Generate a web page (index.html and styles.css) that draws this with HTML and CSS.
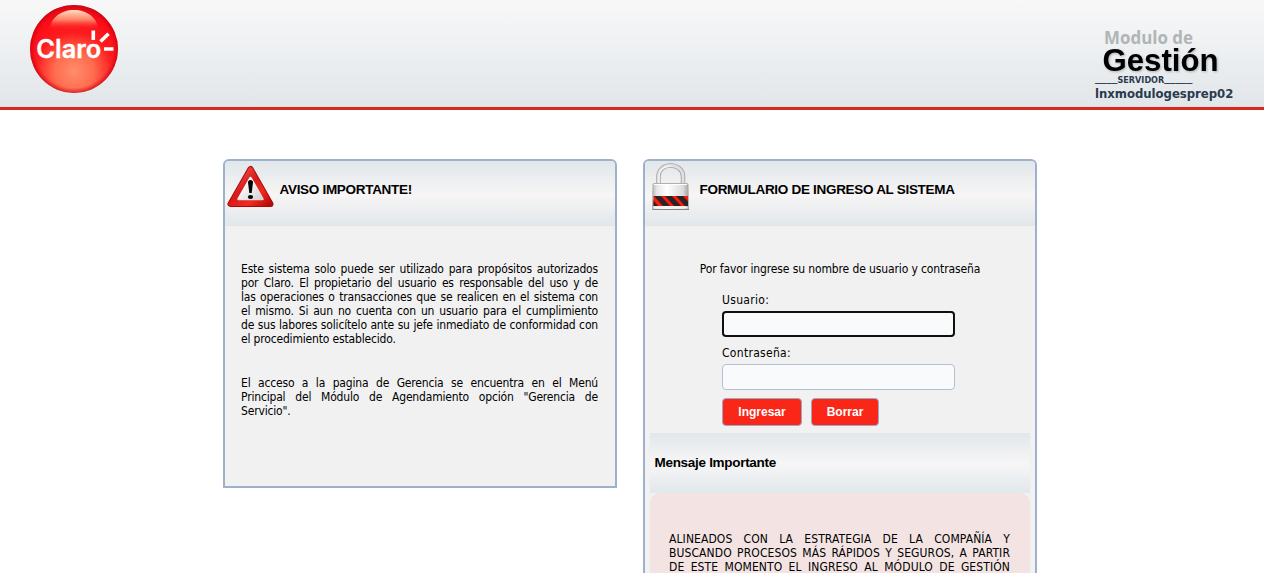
FILE: index.html
```html
<!DOCTYPE html>
<html lang="es">
<head>
<meta charset="utf-8">
<title>Modulo de Gestión</title>
<link rel="stylesheet" href="styles.css">
</head>
<body>
<header class="top">
  <svg class="logo" width="88" height="88" viewBox="0 0 88 88" role="img" aria-label="Claro">
    <defs>
      <radialGradient id="ball" cx=".5" cy=".76" r=".74">
        <stop offset="0" stop-color="#ff8d6c"/><stop offset=".3" stop-color="#ff6c4f"/>
        <stop offset=".6" stop-color="#fd1c1f"/><stop offset=".84" stop-color="#fd0d18"/><stop offset="1" stop-color="#e60d18"/>
      </radialGradient>
      <radialGradient id="edge"><stop offset=".88" stop-color="#d80012" stop-opacity="0"/><stop offset="1" stop-color="#bd0010" stop-opacity=".65"/></radialGradient>
      <linearGradient id="shine" x2="0" y2="1"><stop offset="0" stop-color="#ffe0c2"/><stop offset=".5" stop-color="#ff9473" stop-opacity=".85"/><stop offset="1" stop-color="#fb2020" stop-opacity="0"/></linearGradient>
    </defs>
    <circle cx="44" cy="44" r="44" fill="url(#ball)"/>
    <circle cx="44" cy="44" r="44" fill="url(#edge)"/>
    <path d="M20 25C20 13 31 5 44 5s24 8 24 20z" fill="url(#shine)"/>
    <text class="logo-word" x="6.300" y="53" textLength="65" lengthAdjust="spacingAndGlyphs">Claro</text>
    <path d="M63.300 25.500v9.500M70.500 36.500l8-7.800M74 44h9.500" fill="none" stroke="#fff" stroke-width="3.600"/>
  </svg>
  <div class="brand">
    <svg class="brand-title" width="130" height="48" viewBox="0 0 130 48">
      <text class="modulo" x="9" y="17.500" textLength="89" lengthAdjust="spacingAndGlyphs">Modulo de</text>
      <text class="gestion" x="7.500" y="45" textLength="116" lengthAdjust="spacingAndGlyphs">Gestión</text>
    </svg>
    <div class="server-label"><span class="rule">____</span>SERVIDOR<span class="rule">_____</span></div>
    <div class="server-name">lnxmodulogesprep02</div>
  </div>
</header>
<main class="panels">
  <section class="panel notice">
    <h2 class="panel-head">
      <svg class="icon" width="48" height="48" viewBox="0 0 48 48">
        <defs>
          <linearGradient id="warn" x2="1" y2="1"><stop offset="0" stop-color="#f0625a"/><stop offset=".45" stop-color="#d91a1a"/><stop offset=".72" stop-color="#f02a20"/><stop offset="1" stop-color="#b80808"/></linearGradient>
          <linearGradient id="warnIn" x2="1" y2="1"><stop offset=".2" stop-color="#fff"/><stop offset="1" stop-color="#d2d2d2"/></linearGradient>
        </defs>
        <path d="M23.500 5 3.500 40h40z" fill="#a90808" stroke="#a90808" stroke-width="6" stroke-linejoin="round"/>
        <path d="M23.500 5 3.500 40h40z" fill="url(#warn)" stroke="url(#warn)" stroke-width="4" stroke-linejoin="round"/>
        <path d="M23.500 14 11.500 35h24z" fill="url(#warnIn)" stroke="url(#warnIn)" stroke-width="2.500" stroke-linejoin="round"/>
        <path d="M21 18.500q0-2.500 2.500-2.500t2.500 2.500L24.700 29h-2.400z" fill="#050505"/><ellipse cx="23.500" cy="33" rx="2.600" ry="2" fill="#050505"/>
      </svg>
      <span class="title">AVISO IMPORTANTE!</span>
    </h2>
    <div class="notice-body">
      <p class="copy">
        <span>Este sistema solo puede ser utilizado para propósitos autorizados</span>
        <span>por Claro. El propietario del usuario es responsable del uso y de</span>
        <span>las operaciones o transacciones que se realicen en el sistema con</span>
        <span>el mismo. Si aun no cuenta con un usuario para el cumplimiento</span>
        <span>de sus labores solicítelo ante su jefe inmediato de conformidad con</span>
        <span class="end">el procedimiento establecido.</span>
      </p>
      <p class="copy">
        <span>El acceso a la pagina de Gerencia se encuentra en el Menú</span>
        <span>Principal del Módulo de Agendamiento opción "Gerencia de</span>
        <span class="end">Servicio".</span>
      </p>
    </div>
  </section>
  <section class="panel login">
    <h2 class="panel-head">
      <svg class="icon" width="48" height="48" viewBox="0 0 48 48">
        <defs>
          <linearGradient id="metal"><stop offset="0" stop-color="#b8b8b8"/><stop offset=".12" stop-color="#e6e6e6"/><stop offset=".4" stop-color="#fff"/><stop offset=".85" stop-color="#dcdcdc"/><stop offset="1" stop-color="#a2a2a2"/></linearGradient>
          <clipPath id="band"><path d="M6.500 34h34.500v10h-34.500z"/></clipPath>
        </defs>
        <path d="M11.500 23V14.500C11.500 8 16.500 3.500 23.500 3.500S36 8 36 14.500V23" fill="none" stroke="#a3a3a3" stroke-width="4.500"/>
        <path d="M11.500 23V14.500C11.500 8 16.500 3.500 23.500 3.500S36 8 36 14.500V23" fill="none" stroke="#e0e0e0" stroke-width="2.800"/>
        <path d="M12 21v-6.500C12 8.500 17 4 23.500 4" fill="none" stroke="#fff"/>
        <path d="M6 22.500q0-1 1-1h33q1 0 1 1l.5 25h-36z" fill="url(#metal)" stroke="#b0b0b0"/>
        <path d="M7 22.500h33" stroke="#fff"/>
        <g clip-path="url(#band)"><path d="M6 34h36v10H6z" fill="#f91b0b"/><path d="m-4 34 8 10h7L3 34zM7 34l9 10h7l-9-10zM18 34l9 10h7l-9-10zM29 34l9 10h7l-9-10z" fill="#2b2424"/></g>
        <path d="M6.500 45.500h34" stroke="#f4f4f4" stroke-width="2"/>
        <path d="M5.500 47.500h36.500" stroke="#858585"/>
      </svg>
      <span class="title">FORMULARIO DE INGRESO AL SISTEMA</span>
    </h2>
    <div class="login-body">
      <p class="intro">Por favor ingrese su nombre de usuario y contraseña</p>
      <form class="form">
        <label for="user">Usuario:</label>
        <input class="field active" id="user" type="text">
        <label for="pass">Contraseña:</label>
        <input class="field" id="pass" type="password">
        <div class="actions">
          <button class="btn btn-enter" type="button">Ingresar</button>
          <button class="btn btn-clear" type="button">Borrar</button>
        </div>
      </form>
      <h3 class="message-head">Mensaje Importante</h3>
      <div class="message">
        <p class="copy">
          <span>ALINEADOS CON LA ESTRATEGIA DE LA COMPAÑÍA Y</span>
          <span>BUSCANDO PROCESOS MÁS RÁPIDOS Y SEGUROS, A PARTIR</span>
          <span>DE ESTE MOMENTO EL INGRESO AL MÓDULO DE GESTIÓN</span>
        </p>
      </div>
    </div>
  </section>
</main>
</body>
</html>
```
FILE: styles.css
```css
* { box-sizing: border-box; }
html, body { height: 100%; }
body {
  margin: 0;
  overflow: hidden;
  background: #fff;
  color: #000;
  font: 12px/14px "DejaVu Sans Condensed", "DejaVu Sans", sans-serif;
}
h2, h3, p { margin: 0; }

.top {
  display: flex;
  justify-content: space-between;
  align-items: flex-start;
  height: 110px;
  padding: 5px 29px 0 30px;
  background: linear-gradient(#f8f8f8, #e1e6ea);
  border-bottom: 3px solid #d9291c;
}
.logo, .brand-title, .icon { display: block; flex: none; }
.brand-title { overflow: visible; }
.logo-word { font: 600 25px Inter, sans-serif; fill: #fff; stroke: #fff; stroke-width: .3px; }
.brand { width: 140px; padding-top: 21px; color: #2b3a4e; font-weight: bold; white-space: nowrap; }
.modulo { font: bold 18px "Open Sans", sans-serif; fill: #b0b5b6; }
.gestion { font: bold 32px "Liberation Sans", sans-serif; fill: #000; filter: drop-shadow(1px 1px 1px rgba(0, 0, 0, .25)); }
.server-label { height: 11px; font-size: 9px; line-height: 12px; }
.rule { font-size: 12.500px; font-weight: normal; line-height: 0; vertical-align: 2px; }
.server-name { font-size: 13px; line-height: 18px; letter-spacing: -.03px; }

.panels {
  display: flex;
  align-items: flex-start;
  gap: 26px;
  width: 814px;
  margin: 49px 0 0 223px;
}
.panel {
  width: 394px;
  border: 2px solid #9fb1ca;
  border-radius: 6px 6px 0 0;
  background: #f1f1f1;
  overflow: hidden;
}
.notice { height: 329px; }
.login { height: 414px; border-bottom: 0; }
.panel-head {
  display: flex;
  align-items: flex-start;
  height: 65px;
  padding: 3px 2px;
  background: linear-gradient(#e1e7eb, #f7f5f5 53%, #e1e7eb);
}
.login .panel-head { padding-top: 1px; }
.title, .message-head {
  font: bold 13.500px/16px "Liberation Sans", sans-serif;
  letter-spacing: -.3px;
  white-space: nowrap;
}
.title { margin: 18px 0 0 4.500px; }
.login .title { margin-top: 20px; }
.notice-body { padding: 36px 17px 0 16px; }
.copy + .copy { margin-top: 30px; }
.copy span { display: block; white-space: nowrap; text-align-last: justify; letter-spacing: -.17px; }
.copy .end { text-align-last: left; }

.login-body { padding: 36px 5px 0; }
.intro { text-align: center; white-space: nowrap; letter-spacing: -.12px; }
.form { display: flex; flex-direction: column; width: 233px; margin: 17px 0 0 72px; }
.form label { height: 18px; letter-spacing: .3px; }
.field {
  width: 233px;
  height: 26px;
  margin: 0 0 9px;
  border: 1px solid #b4c0d2;
  border-radius: 4px;
  background: #f9fafc;
  outline: none;
}
.field.active { border: 2px solid #101010; }
.actions { display: flex; gap: 9px; margin-top: -1px; }
.btn {
  height: 28px;
  padding: 0;
  border: 1px solid #9ba9c4;
  border-radius: 4px;
  background: #fa2718;
  color: #fff;
  font: bold 12px/14px "Liberation Sans", sans-serif;
}
.btn-enter { width: 80px; }
.btn-clear { width: 68px; }
.message-head {
  height: 60px;
  margin-top: 7px;
  padding: 22px 4.500px 0;
  background: linear-gradient(#e1e7eb, #f7f6f6 50%, #e1e7eb);
}
.message {
  height: 80px;
  padding: 39px 20px 0 19px;
  border-radius: 10px 10px 0 0;
  background: #f3e4e3;
}
.message .copy span { letter-spacing: .1px; }
```
